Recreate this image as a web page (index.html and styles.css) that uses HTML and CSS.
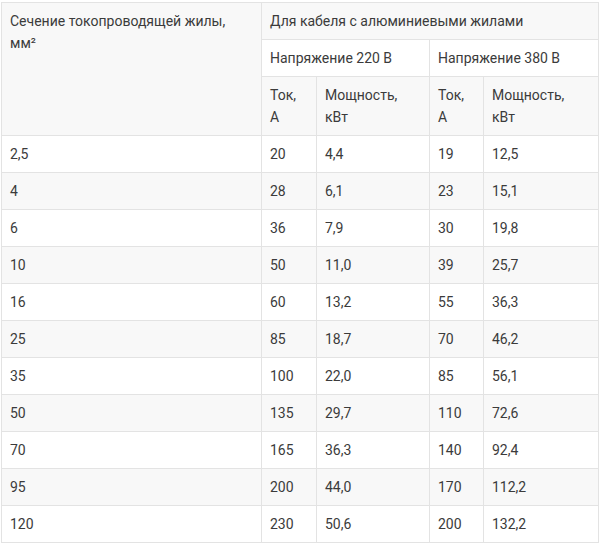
FILE: index.html
```html
<!DOCTYPE html>
<html lang="ru">
<head>
<meta charset="utf-8">
<title>Таблица</title>
<link rel="stylesheet" href="styles.css">
</head>
<body>
<div class="wrap">
<table class="cable">
  <colgroup>
    <col class="c1"><col class="c2"><col class="c3"><col class="c4"><col class="c5">
  </colgroup>
  <thead>
    <tr>
      <td rowspan="3">Сечение токопроводящей жилы, мм²</td>
      <td colspan="4">Для кабеля с алюминиевыми жилами</td>
    </tr>
    <tr>
      <td colspan="2">Напряжение 220 В</td>
      <td colspan="2">Напряжение 380 В</td>
    </tr>
    <tr>
      <td>Ток,<br>А</td>
      <td>Мощность,<br>кВт</td>
      <td>Ток,<br>А</td>
      <td>Мощность,<br>кВт</td>
    </tr>
  </thead>
  <tbody>
    <tr><td>2,5</td><td>20</td><td>4,4</td><td>19</td><td>12,5</td></tr>
    <tr><td>4</td><td>28</td><td>6,1</td><td>23</td><td>15,1</td></tr>
    <tr><td>6</td><td>36</td><td>7,9</td><td>30</td><td>19,8</td></tr>
    <tr><td>10</td><td>50</td><td>11,0</td><td>39</td><td>25,7</td></tr>
    <tr><td>16</td><td>60</td><td>13,2</td><td>55</td><td>36,3</td></tr>
    <tr><td>25</td><td>85</td><td>18,7</td><td>70</td><td>46,2</td></tr>
    <tr><td>35</td><td>100</td><td>22,0</td><td>85</td><td>56,1</td></tr>
    <tr><td>50</td><td>135</td><td>29,7</td><td>110</td><td>72,6</td></tr>
    <tr><td>70</td><td>165</td><td>36,3</td><td>140</td><td>92,4</td></tr>
    <tr><td>95</td><td>200</td><td>44,0</td><td>170</td><td>112,2</td></tr>
    <tr><td>120</td><td>230</td><td>50,6</td><td>200</td><td>132,2</td></tr>
  </tbody>
</table>
</div>
</body>
</html>
```
FILE: styles.css
```css
html, body {
  margin: 0;
  padding: 0;
  background: #ffffff;
}
.wrap {
  padding: 2px 2px 0 1px;
}
.cable {
  width: 597px;
  border-collapse: collapse;
  table-layout: fixed;
  font-family: Roboto, "Liberation Sans", sans-serif;
  font-size: 14px;
  line-height: 22px;
  color: #3b3b3b;
}
.c1 { width: 260px; }
.c2 { width: 55px; }
.c3 { width: 113px; }
.c4 { width: 54px; }
.c5 { width: 115px; }
.cable td {
  border: 1px solid #e3e3e3;
  padding: 7px 8px;
  vertical-align: top;
  text-align: left;
}
.cable thead tr:nth-child(odd),
.cable tbody tr:nth-child(even) {
  background: #f8f8f8;
}
```
